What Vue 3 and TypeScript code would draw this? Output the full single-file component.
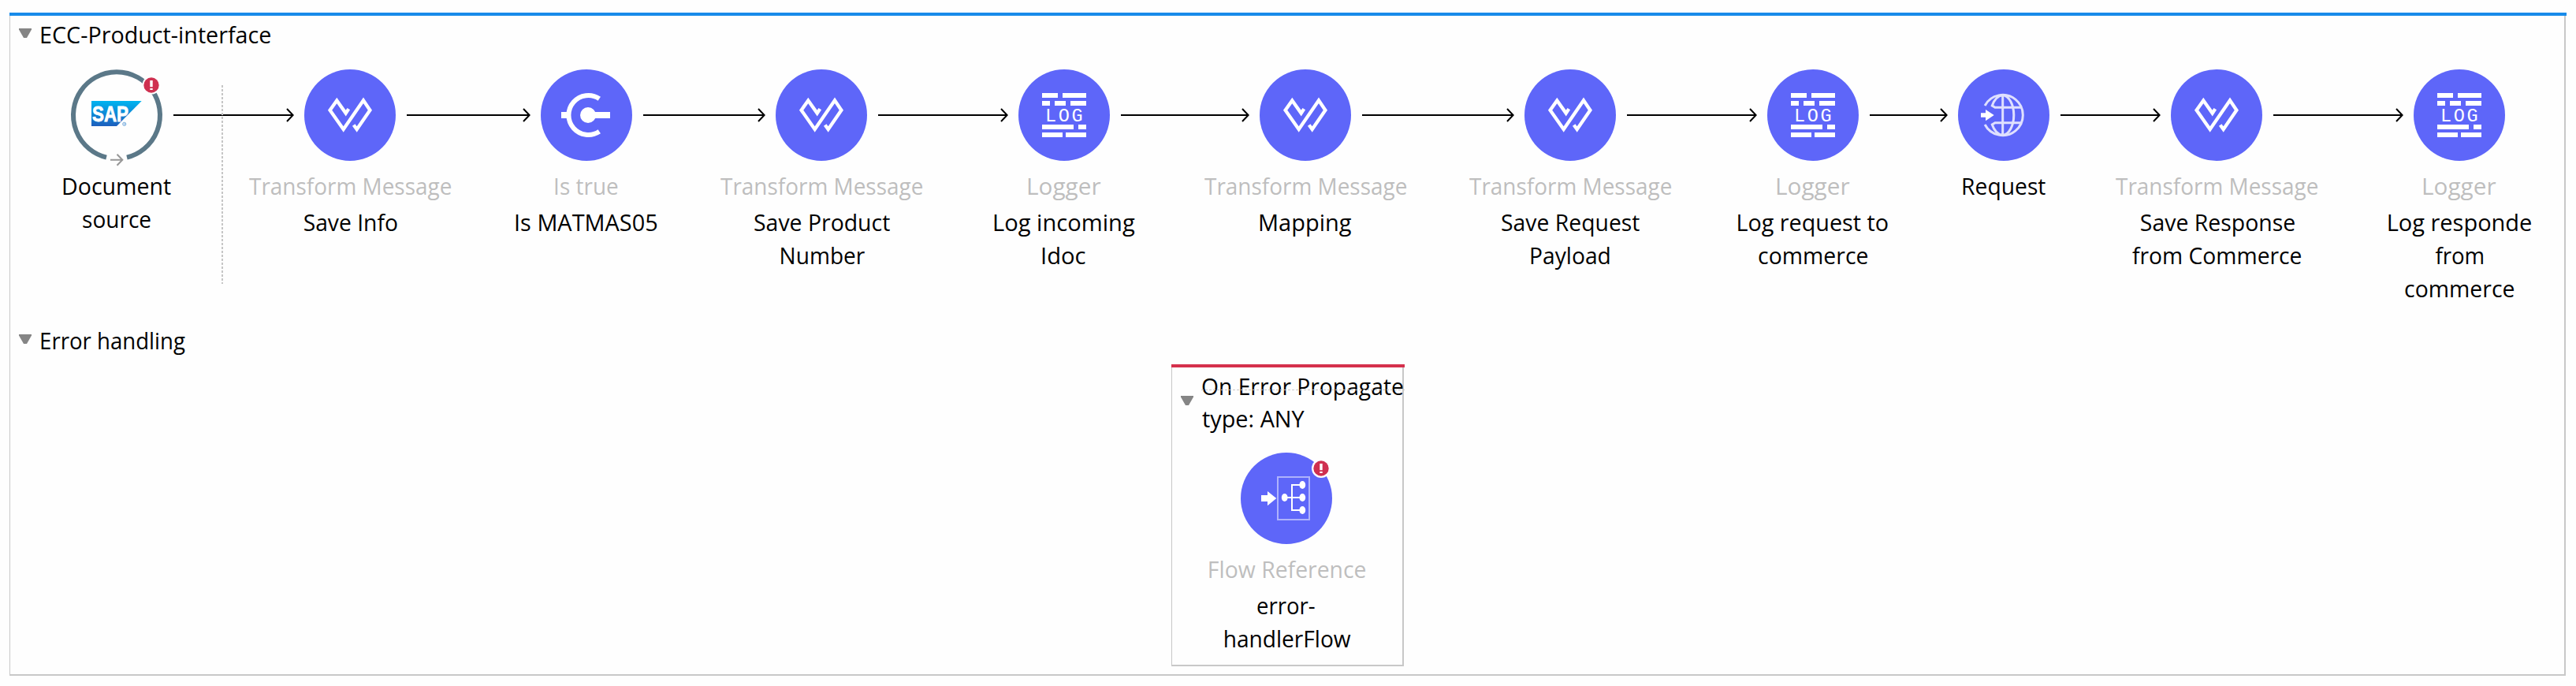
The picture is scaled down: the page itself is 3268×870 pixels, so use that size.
<script setup lang="ts">
type IconKind = 'document' | 'transform' | 'choice' | 'logger' | 'request' | 'flowref'

interface Line {
  text: string
  width: number
  shift?: number
}

interface FlowNode {
  kind: IconKind
  center: number
  type?: Line
  name: Line[]
  alert?: boolean
}

const FONT_SIZE = 29.4
const FONT_FAMILY = '"Open Sans", "Noto Sans", sans-serif'
const RADIUS = 58

const transformType: Line = { text: 'Transform Message', width: 256 }
const loggerType: Line = { text: 'Logger', width: 92.6 }

const nodes: FlowNode[] = [
  {
    kind: 'document',
    center: 148,
    alert: true,
    name: [
      { text: 'Document', width: 136.7 },
      { text: 'source', width: 85.7 },
    ],
  },
  { kind: 'transform', center: 444, type: transformType, name: [{ text: 'Save Info', width: 118.7, shift: 0.6 }] },
  { kind: 'choice', center: 744, type: { text: 'Is true', width: 79.3 }, name: [{ text: 'Is MATMAS05', width: 180 }] },
  {
    kind: 'transform',
    center: 1042,
    type: transformType,
    name: [
      { text: 'Save Product', width: 171.8, shift: 1 },
      { text: 'Number', width: 106.8, shift: 1.5 },
    ],
  },
  {
    kind: 'logger',
    center: 1350,
    type: loggerType,
    name: [
      { text: 'Log incoming', width: 178.7 },
      { text: 'Idoc', width: 55.5 },
    ],
  },
  { kind: 'transform', center: 1656, type: transformType, name: [{ text: 'Mapping', width: 116.5 }] },
  {
    kind: 'transform',
    center: 1992,
    type: transformType,
    name: [
      { text: 'Save Request', width: 175 },
      { text: 'Payload', width: 100 },
    ],
  },
  {
    kind: 'logger',
    center: 2300,
    type: loggerType,
    name: [
      { text: 'Log request to', width: 191, shift: -0.6 },
      { text: 'commerce', width: 138 },
    ],
  },
  { kind: 'request', center: 2542, name: [{ text: 'Request', width: 105 }] },
  {
    kind: 'transform',
    center: 2812,
    type: transformType,
    name: [
      { text: 'Save Response', width: 195, shift: 0.8 },
      { text: 'from Commerce', width: 214 },
    ],
  },
  {
    kind: 'logger',
    center: 3120,
    type: loggerType,
    name: [
      { text: 'Log responde', width: 181.3, shift: 0.6 },
      { text: 'from', width: 60.7, shift: -0.6 },
      { text: 'commerce', width: 138 },
    ],
  },
]

const errorNode: FlowNode = {
  kind: 'flowref',
  center: 1632,
  alert: true,
  type: { text: 'Flow Reference', width: 198.3, shift: 0.8 },
  name: [
    { text: 'error-', width: 73.3 },
    { text: 'handlerFlow', width: 160.3, shift: 1.6 },
  ],
}

const title: Line = { text: 'ECC-Product-interface', width: 291 }
const errorTitle: Line = { text: 'Error handling', width: 183 }
const propagate: Line[] = [
  { text: 'On Error Propagate', width: 254.3 },
  { text: 'type: ANY', width: 130.3 },
]

function gapAfter(index: number): number {
  return nodes[index + 1].center - nodes[index].center - RADIUS * 2
}

// Scales a label horizontally so its visible ink spans exactly the given width.
const ctx = document.createElement('canvas').getContext('2d')!
ctx.font = `${FONT_SIZE}px ${FONT_FAMILY}`
function fit(line: Line): string {
  const m = ctx.measureText(line.text)
  const scale = line.width / (m.actualBoundingBoxLeft + m.actualBoundingBoxRight)
  const x = m.actualBoundingBoxLeft * scale + (line.shift ?? 0)
  return `matrix(${scale.toFixed(4)} 0 0 1 ${x.toFixed(2)} 0)`
}
</script>

<template>
  <main class="canvas">
    <div class="flow-bar"></div>
    <section class="flow">
      <header class="head">
        <svg class="caret" width="16" height="12"><path d="M0 0H16V1.5L10 12H6L0 1.5Z" /></svg>
        <svg class="label" :width="title.width" height="42"><text y="31" :transform="fit(title)">{{ title.text }}</text></svg>
      </header>

      <div class="pipeline">
        <template v-for="(node, i) in nodes" :key="i">
          <article class="node">
            <svg class="icon" width="116" height="116" viewBox="0 0 116 116">
              <template v-if="node.kind === 'document'">
                <defs>
                  <linearGradient id="sap" x1="0" y1="0" x2="0" y2="1">
                    <stop offset="0" stop-color="#00b4f0" />
                    <stop offset="1" stop-color="#1d5fbd" />
                  </linearGradient>
                </defs>
                <path d="M45 111.6A55 55 0 1 1 71 111.6" fill="none" stroke="#5b7888" stroke-width="6" />
                <path d="M26 40H89.7L58 72H26Z" fill="url(#sap)" />
                <text class="sap" x="27" y="65.6" textLength="46" lengthAdjust="spacingAndGlyphs">SAP</text>
                <circle cx="67.7" cy="69.3" r="2.1" fill="none" stroke="#5b9ad6" stroke-width=".8" />
                <text class="reg" x="66.5" y="70.7">R</text>
                <path d="M50 114.7H65M58.5 107.7L65.3 114.7L58.5 121.7" fill="none" stroke="#979797" stroke-width="2" />
              </template>
              <circle v-else cx="58" cy="58" r="58" fill="#5e66f9" />

              <path
                v-if="node.kind === 'transform'"
                d="M56.3 50.1L52.7 55.6L41.3 39.4L32.6 51.7L49.7 76L75 39.4L83.4 51.7L66.7 76L62.7 70.4"
                fill="none"
                stroke="#fff"
                stroke-width="4.3"
                stroke-miterlimit="10"
              />
              <g v-if="node.kind === 'choice'">
                <path d="M74.3 37.2A25 25 0 1 0 74.3 78.8" fill="none" stroke="#fff" stroke-width="6" />
                <path d="M26 54H34V62H26ZM60 54H88V62H60Z" fill="#fff" />
                <circle cx="60" cy="58" r="10" fill="#fff" />
              </g>
              <g v-if="node.kind === 'logger'" fill="#fff">
                <path
                  d="M30 30H50V36H30ZM56 30H86V36H56ZM30 40H40V46H30ZM46 40H60V46H46ZM66 40H86V46H66ZM30 70H70V76H30ZM76 70H86V76H76ZM30 80H56V86H30ZM60 80H86V86H60Z"
                />
                <text class="log" x="34" y="65.8" textLength="47.5" lengthAdjust="spacing">LOG</text>
              </g>
              <g v-if="node.kind === 'request'">
                <g fill="none" stroke="#dfe0fe" stroke-width="3">
                  <path d="M34.1 46A25.6 25.6 0 1 1 34.1 70" />
                  <path d="M56.7 32V84M80.5 48.3H47L43.3 46C46 38 50 33.5 56.7 32.4M80.5 67.7H47L43.3 70C46 78 50 82.5 56.7 83.6" />
                  <path d="M56.7 32.4C65 33.5 70.8 45 70.8 58S65 82.5 56.7 83.6" />
                </g>
                <path d="M29 55.3H35V51L45.7 58L35 65.2V60.7H29Z" fill="#fff" />
              </g>

              <g v-if="node.alert">
                <circle cx="102" cy="20" r="11.5" fill="#fefefe" />
                <circle cx="102" cy="20" r="9.7" fill="#cf3050" />
                <path d="M100.3 14H103.7V22.3H100.3ZM100.3 24H103.7V26H100.3Z" fill="#fff" />
              </g>
            </svg>
            <svg v-if="node.type" class="label type" :width="node.type.width" height="42">
              <text y="30.7" :transform="fit(node.type)">{{ node.type.text }}</text>
            </svg>
            <div class="name">
              <svg v-for="line in node.name" :key="line.text" class="label" :width="line.width" height="42">
                <text y="30.7" :transform="fit(line)">{{ line.text }}</text>
              </svg>
            </div>
          </article>

          <div v-if="i < nodes.length - 1" class="link" :style="{ width: gapAfter(i) + 'px' }">
            <div class="wire"></div>
            <svg class="tip" width="10" height="18" viewBox="0 0 10 18">
              <path d="M1 1L8.6 9L1 17" fill="none" stroke="#000" stroke-width="2" />
            </svg>
            <svg v-if="i === 0" class="divider" width="2" height="252">
              <path d="M1 0V252" stroke="#c6c6c6" stroke-width="2" stroke-dasharray="3 2" />
            </svg>
          </div>
        </template>
      </div>

      <header class="head error-head">
        <svg class="caret" width="16" height="12"><path d="M0 0H16V1.5L10 12H6L0 1.5Z" /></svg>
        <svg class="label" :width="errorTitle.width" height="42">
          <text y="30.7" :transform="fit(errorTitle)">{{ errorTitle.text }}</text>
        </svg>
      </header>

      <div class="handler">
        <div class="handler-bar"></div>
        <div class="handler-body">
          <header class="handler-head">
            <svg class="caret" width="16" height="12"><path d="M0 0H16V1.5L10 12H6L0 1.5Z" /></svg>
            <div class="handler-title">
              <svg v-for="line in propagate" :key="line.text" class="label" :width="line.width" height="41">
                <text y="31" :transform="fit(line)">{{ line.text }}</text>
              </svg>
            </div>
            <svg class="rule" width="258" height="1">
              <path d="M0 .5H258" stroke="#c8c8c8" stroke-dasharray="3 2" />
            </svg>
          </header>
          <article class="node">
            <svg class="icon" width="116" height="116" viewBox="0 0 116 116">
              <circle cx="58" cy="58" r="58" fill="#5e66f9" />
              <rect x="47" y="31" width="40" height="54" fill="none" stroke="#aeb2fc" stroke-width="2" />
              <path d="M26 54H34V49L45.3 58L34 67.3V62H26Z" fill="#fff" />
              <path d="M78 41H65V73H78M56 57H78" fill="none" stroke="#fff" stroke-width="2" />
              <g fill="#fff">
                <ellipse cx="55.7" cy="57" rx="3.9" ry="5" />
                <ellipse cx="78.3" cy="41" rx="3.9" ry="5" />
                <ellipse cx="78.3" cy="57" rx="3.9" ry="5" />
                <ellipse cx="78.3" cy="73" rx="3.9" ry="5" />
              </g>
              <circle cx="102" cy="20" r="12" fill="#fefefe" />
              <circle cx="102" cy="20" r="9.7" fill="#cf3050" />
              <path d="M100.3 14H103.7V22.3H100.3ZM100.3 24H103.7V26H100.3Z" fill="#fff" />
            </svg>
            <svg class="label type" :width="errorNode.type!.width" height="42">
              <text y="30.7" :transform="fit(errorNode.type!)">{{ errorNode.type!.text }}</text>
            </svg>
            <div class="name">
              <svg v-for="line in errorNode.name" :key="line.text" class="label" :width="line.width" height="42">
                <text y="30.9" :transform="fit(line)">{{ line.text }}</text>
              </svg>
            </div>
          </article>
        </div>
      </div>
    </section>
  </main>
</template>

<style>
body {
  margin: 0;
  background: #fefefe;
}
</style>

<style scoped>
.canvas {
  box-sizing: border-box;
  width: 3268px;
  height: 870px;
  padding: 16px 12px 0;
  background: #fefefe;
  overflow: hidden;
}
svg {
  display: block;
  flex: none;
  overflow: visible;
}
.flow-bar {
  height: 4px;
  background: #188bea;
}
.flow {
  box-sizing: border-box;
  width: 3243px;
  height: 837px;
  border: solid #c8c8c8;
  border-width: 0 2px 2px 1px;
}
.label {
  fill: #000;
  font-family: 'Open Sans', 'Noto Sans', sans-serif;
  font-size: 29.4px;
}
.caret {
  fill: #858585;
}
.head {
  box-sizing: border-box;
  display: flex;
  gap: 12px;
  height: 68px;
  padding: 4px 0 0 11px;
}
.head .caret {
  margin-top: 12px;
}
.pipeline {
  display: flex;
  height: 320px;
  padding-left: 77px;
}
.node {
  display: flex;
  flex-direction: column;
  align-items: center;
  flex: none;
  width: 116px;
}
.icon {
  margin-bottom: 12px;
}
.type {
  margin-bottom: 4px;
  fill: #bebebe;
}
.name {
  display: flex;
  flex-direction: column;
  align-items: center;
}
.link {
  position: relative;
  box-sizing: border-box;
  display: flex;
  align-items: center;
  flex: none;
  height: 116px;
  padding: 0 13px 0 14px;
}
.wire {
  flex: 1;
  height: 2px;
  margin-right: -9px;
  background: #000;
}
.divider {
  position: absolute;
  left: 75px;
  top: 20px;
}
.error-head {
  height: 54px;
}
.handler {
  width: 296px;
  margin-left: 1473px;
}
.handler-bar {
  height: 4px;
  background: #d5304c;
}
.handler-body {
  box-sizing: border-box;
  width: 295px;
  height: 379px;
  border: solid #c8c8c8;
  border-width: 0 2px 2px 1px;
}
.handler-body .node {
  margin-left: 87px;
}
.handler-head {
  position: relative;
  display: flex;
  gap: 11px;
  height: 104px;
  padding: 4px 0 0 11px;
}
.handler-head .caret {
  margin-top: 32px;
}
.rule {
  position: absolute;
  left: 37px;
  top: 28px;
}
.sap {
  fill: #fff;
  stroke: #fff;
  stroke-width: 0.8px;
  font: bold 27px 'Liberation Sans', sans-serif;
}
.reg {
  fill: #5b9ad6;
  font: 4px 'Liberation Sans', sans-serif;
}
.log {
  font: 23.5px 'Liberation Mono', monospace;
}
</style>
